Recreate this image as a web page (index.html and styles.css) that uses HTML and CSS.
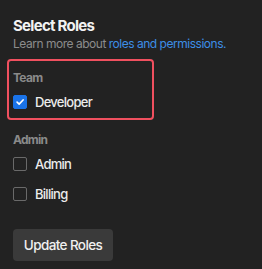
FILE: index.html
```html
<!DOCTYPE html>
<html>
<head>
<meta charset="utf-8">
<link rel="stylesheet" href="styles.css">
</head>
<body>
<div class="panel">
  <h2 class="title">Select Roles</h2>
  <p class="subtitle">Learn more about <a class="link" href="#">roles and permissions.</a></p>

  <div class="group group-highlight">
    <div class="group-label">Team</div>
    <label class="row">
      <span class="box box-checked">
        <svg viewBox="0 0 14 14" width="14" height="14"><path d="M3.6 7.2 L6 9.5 L10.6 4.6" fill="none" stroke="#fff" stroke-width="1.9" stroke-linecap="round" stroke-linejoin="round"/></svg>
      </span>
      <span class="row-text">Developer</span>
    </label>
  </div>

  <div class="group group-plain">
    <div class="group-label">Admin</div>
    <label class="row">
      <span class="box"></span>
      <span class="row-text">Admin</span>
    </label>
    <label class="row">
      <span class="box"></span>
      <span class="row-text">Billing</span>
    </label>
  </div>

  <button class="btn">Update Roles</button>
</div>
</body>
</html>
```
FILE: styles.css
```css
html, body {
  margin: 0;
  padding: 0;
  background: #222222;
  height: 100%;
}
body {
  font-family: Inter, "Noto Sans", sans-serif;
  color: #e8e8e8;
  letter-spacing: -0.045em;
}
.panel {
  padding: 16px 13px 0 13px;
  display: flex;
  flex-direction: column;
  align-items: flex-start;
}
.title {
  margin: 0;
  font-size: 15px;
  line-height: 20px;
  font-weight: 700;
  color: #f2f2f2;
}
.subtitle {
  margin: 0;
  font-size: 12px;
  line-height: 16px;
  color: #8c8c8c;
  letter-spacing: -0.04em;
}
.link {
  color: #3d8ee6;
  text-decoration: none;
}
.group {
  display: flex;
  flex-direction: column;
}
.group-highlight {
  margin-top: 7px;
  margin-left: -6px;
  width: 147px;
  box-sizing: border-box;
  border: 2px solid #f0505f;
  border-radius: 4px;
  padding: 9px 4px 6px 4px;
}
.group-plain {
  margin-top: 12px;
}
.group-label {
  font-size: 12px;
  line-height: 16px;
  font-weight: 700;
  color: #8a8a8a;
  margin-bottom: 6px;
}
.row {
  display: flex;
  align-items: center;
  height: 20px;
  gap: 8px;
}
.row + .row {
  margin-top: 10px;
}
.box {
  width: 14px;
  height: 14px;
  box-sizing: border-box;
  border: 1.5px solid #6a6a6a;
  border-radius: 2px;
  display: flex;
  align-items: center;
  justify-content: center;
}
.box-checked {
  background: #1a73e8;
  border-color: #1a73e8;
}
.box-checked svg {
  display: block;
}
.row-text {
  font-size: 13px;
  line-height: 18px;
  font-weight: 500;
  color: #ececec;
}
.btn {
  margin-top: 25px;
  width: 100px;
  height: 32px;
  border: none;
  border-radius: 4px;
  background: #3a3a3a;
  color: #f0f0f0;
  font-family: Inter, "Noto Sans", sans-serif;
  letter-spacing: -0.045em;
  font-size: 13.5px;
  font-weight: 500;
  padding: 0;
}
```
